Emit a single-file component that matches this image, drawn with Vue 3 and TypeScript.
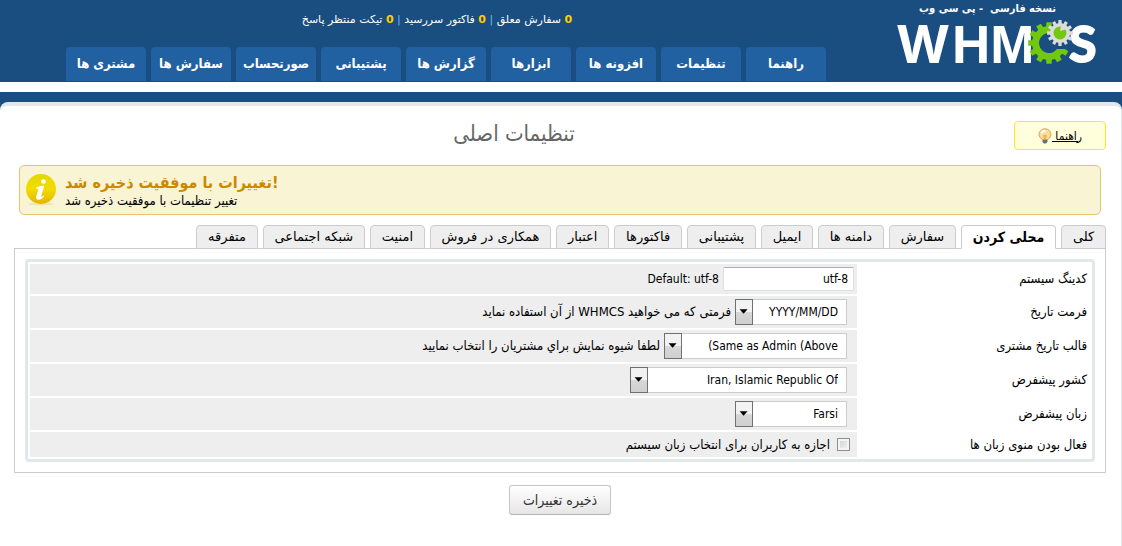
<script setup lang="ts">
import { ref } from 'vue'

interface Stat {
  count: number
  label: string
}

interface SelectRow {
  id: string
  label: string
  value: string
  size: string
  note?: string
}

const stats: Stat[] = [
  { count: 0, label: 'سفارش معلق' },
  { count: 0, label: 'فاکتور سررسید' },
  { count: 0, label: 'تیکت منتظر پاسخ' },
]

const menu: string[] = [
  'راهنما',
  'تنظیمات',
  'افزونه ها',
  'ابزارها',
  'گزارش ها',
  'پشتیبانی',
  'صورتحساب',
  'سفارش ها',
  'مشتری ها',
]

const tabs: string[] = [
  'کلی',
  'محلی کردن',
  'سفارش',
  'دامنه ها',
  'ایمیل',
  'پشتیبانی',
  'فاکتورها',
  'اعتبار',
  'همکاری در فروش',
  'امنیت',
  'شبکه اجتماعی',
  'متفرقه',
]

const activeTab = ref('محلی کردن')
const charset = ref('utf-8')
const allowLanguage = ref(false)

const selects = ref<SelectRow[]>([
  {
    id: 'date-format',
    label: 'فرمت تاریخ',
    value: 'YYYY/MM/DD',
    size: 'small',
    note: 'فرمتی که می خواهید WHMCS از آن استفاده نماید',
  },
  {
    id: 'client-date',
    label: 'قالب تاریخ مشتری',
    value: '\u2066(Same as Admin (Above\u2069',
    size: 'medium',
    note: 'لطفا شیوه نمایش براي مشتریان را انتخاب نمایید',
  },
  { id: 'country', label: 'کشور پیشفرض', value: 'Iran, Islamic Republic Of', size: 'large' },
  { id: 'language', label: 'زبان پیشفرض', value: 'Farsi', size: 'small' },
])

function gear(cx: number, cy: number, outer: number, root: number, teeth: number): string {
  const points: string[] = []
  const step = (Math.PI * 2) / teeth
  for (let i = 0; i < teeth; i++) {
    const a = i * step - Math.PI / 2
    const corners: [number, number][] = [
      [root, -0.32],
      [outer, -0.24],
      [outer, 0.24],
      [root, 0.32],
    ]
    for (const [r, t] of corners) {
      points.push(`${(cx + r * Math.cos(a + t * step)).toFixed(2)},${(cy + r * Math.sin(a + t * step)).toFixed(2)}`)
    }
  }
  return `M${points.join('L')}Z`
}

const greenGear = gear(153, 41, 21, 17, 12)
const greyGear = gear(164, 31, 13, 10, 12)
</script>

<template>
  <div class="page" dir="rtl">
    <header class="header">
      <a class="logo" href="#" aria-label="WHMCS">
        <span class="edition">نسخه فارسی &nbsp;- پی سی وب</span>
        <svg class="wordmark" width="202" height="66" viewBox="0 0 202 66" direction="ltr">
          <g class="letters">
            <text x="0" y="61">W</text>
            <text class="middle-letters" x="56" y="61">HM</text>
            <text class="last-letter" x="173" y="60">S</text>
          </g>
          <path :d="greenGear" fill="#71c80f" />
          <path d="M153 31a10 10 0 1 0 8 16h13V20h-14z" fill="#1a4d80" />
          <path :d="greyGear" fill="#dcdcdc" />
          <circle cx="164" cy="31" r="6.500" fill="#71c80f" />
          <path d="M164 29l1-5.500a7 7 0 0 1 5 4z" fill="#dcdcdc" />
        </svg>
      </a>
      <div class="top">
        <p class="stats">
          <template v-for="(s, i) in stats" :key="s.label">
            <span v-if="i" class="bar"> | </span><a href="#"><b>{{ s.count }}</b> {{ s.label }}</a>
          </template>
        </p>
        <nav class="menu">
          <a v-for="m in menu" :key="m" href="#">{{ m }}</a>
        </nav>
      </div>
    </header>
    <div class="strip"></div>
    <div class="frame">
      <main class="main">
        <div class="heading">
          <a class="help" href="#">
            <span>راهنما&nbsp;</span>
            <svg width="14" height="16" viewBox="0 0 14 16">
              <path d="M7 .8a6 5.6 0 0 0-6 5.6c0 2.400 1.700 3.400 3 5.100h6c1.300-1.700 3-2.700 3-5.100A6 5.600 0 0 0 7 .8z" fill="#fbdc9a" stroke="#d9a066" />
              <path d="M3.500 5.500a3.500 3 0 0 1 4-2.500" fill="none" stroke="#fff" stroke-width="2" />
              <path d="M5 7l1 4h2l1-4z" fill="#f6b73c" />
              <path d="M4.500 12h5v2l-1.500 1.500h-2L4.500 14z" fill="#6b7078" />
            </svg>
          </a>
          <h1>تنظیمات اصلی</h1>
        </div>

        <div class="alert" dir="ltr" role="status">
          <svg width="32" height="34" viewBox="0 0 32 34">
            <defs>
              <linearGradient id="info" x1="0" y1="0" x2="0" y2="1">
                <stop offset="0" stop-color="#e2d800" />
                <stop offset=".5" stop-color="#f2dc00" />
                <stop offset="1" stop-color="#e3b400" />
              </linearGradient>
            </defs>
            <ellipse cx="16" cy="31" rx="13" ry="1.500" fill="#f1e4b8" />
            <circle cx="16" cy="16" r="15" fill="url(#info)" />
            <ellipse cx="18.500" cy="8.500" rx="2.500" ry="2.200" fill="#fff" />
            <path d="M11 14.500c2.500-1 5-1.700 7.500-2l.7.500-3 10.200c-.2.900.6.900 2.300-.7l.7.800c-2 2.400-3.900 3.500-5.800 3.500-2 0-2.700-1.300-2.200-3.200l2.300-7.700-2.300-.4z" fill="#fff" />
          </svg>
          <div>
            <strong>تغییرات با موفقیت ذخیره شد!</strong>
            <p>تغییر تنظیمات با موفقیت ذخیره شد</p>
          </div>
        </div>

        <div class="tabs" role="tablist">
          <button
            v-for="t in tabs"
            :key="t"
            type="button"
            role="tab"
            :aria-selected="t === activeTab"
            :class="{ active: t === activeTab }"
            @click="activeTab = t"
          >
            {{ t }}
          </button>
        </div>

        <form @submit.prevent>
          <div class="panel">
            <div class="box">
              <table>
                <tbody>
                  <tr class="first">
                    <th scope="row"><label for="charset">کدینگ سیستم</label></th>
                    <td>
                      <div class="field">
                        <input id="charset" v-model="charset" type="text" /><span class="latin">Default: utf-8</span>
                      </div>
                    </td>
                  </tr>
                  <tr v-for="r in selects" :key="r.id" class="pick">
                    <th scope="row"><label :for="r.id">{{ r.label }}</label></th>
                    <td>
                      <div class="field">
                        <span class="select" :class="r.size">
                          <select :id="r.id" v-model="r.value">
                            <option>{{ r.value }}</option>
                          </select>
                          <svg class="arrow" width="18" height="26" viewBox="0 0 18 26"><path d="M4 10h9l-4.500 5z" /></svg>
                        </span>
                        <span v-if="r.note">{{ r.note }}</span>
                      </div>
                    </td>
                  </tr>
                  <tr class="last">
                    <th scope="row"><label for="allow-language">فعال بودن منوی زبان ها</label></th>
                    <td>
                      <label class="field check">
                        <input id="allow-language" v-model="allowLanguage" type="checkbox" />
                        <span>اجازه به کاربران برای انتخاب زبان سیستم</span>
                      </label>
                    </td>
                  </tr>
                </tbody>
              </table>
            </div>
          </div>
          <div class="actions">
            <button type="submit">ذخیره تغییرات</button>
          </div>
        </form>
      </main>
    </div>
  </div>
</template>

<style>
body {
  background: #fff;
}
</style>

<style scoped>
.page {
  display: flex;
  flex-direction: column;
  min-height: 100vh;
  font: 13px/16px 'DejaVu Sans Condensed', 'DejaVu Sans', sans-serif;
  color: #000;
}

.page * {
  box-sizing: border-box;
}

.header {
  display: flex;
  justify-content: space-between;
  height: 82px;
  padding: 0 24px 0 66px;
  background: #1a4d80;
}

.logo {
  display: flex;
  flex-direction: column;
  width: 202px;
  color: #fff;
  text-decoration: none;
}

.edition {
  padding-right: 42px;
  font-size: 11px;
  font-weight: bold;
  line-height: 18px;
  white-space: nowrap;
}

.wordmark {
  margin-top: -16px;
  overflow: visible;
}

.letters {
  font: bold 52px Inter, sans-serif;
  fill: #fff;
}

.middle-letters {
  font: bold 53px 'Liberation Sans', sans-serif;
}

.last-letter {
  font: bold 50px Lato, sans-serif;
  stroke: #fff;
  stroke-width: 2px;
}

.top {
  display: flex;
  flex-direction: column;
  justify-content: space-between;
  padding-bottom: 1px;
}

.stats {
  margin: 12px 18px 0 0;
  font: 11px/16px 'DejaVu Sans', sans-serif;
  text-align: center;
  color: #6cb8f0;
}

.stats a {
  color: #fff;
  text-decoration: none;
}

.stats b {
  color: #fc0;
}

.menu {
  display: flex;
  gap: 5px;
}

.menu a {
  width: 80px;
  padding: 9px 0;
  border-radius: 4px 4px 0 0;
  background: #2161a1;
  color: #fff;
  font-weight: bold;
  text-align: center;
  text-decoration: none;
}

.strip {
  height: 10px;
}

.frame {
  display: flex;
  flex: 1;
  padding-top: 10px;
  background: linear-gradient(#1a4d80 24px, #fff 24px);
}

.main {
  flex: 1;
  padding: 15px 15px 24px 14px;
  border-top: 4px solid #e2e7e9;
  border-right: 1px solid #e2e7e9;
  border-radius: 8px 8px 0 0;
  background: #fff;
}

.heading {
  display: flex;
}

.help {
  display: flex;
  align-items: center;
  justify-content: center;
  width: 92px;
  height: 29px;
  border: 1px solid #ffe91e;
  border-radius: 4px;
  background: #ffffdc;
  color: #000;
  font-size: 12px;
}

h1 {
  flex: 1;
  margin: 0;
  color: #666;
  font-size: 22px;
  font-weight: normal;
  line-height: 26px;
  text-align: center;
}

.alert {
  display: flex;
  gap: 8px;
  height: 50px;
  margin: 15px 5px 10px;
  padding: 7px 5px;
  border: 1px solid #e8c271;
  border-radius: 5px;
  background: #f9f4d4;
}

.alert strong {
  display: block;
  color: #c80;
  font-size: 16px;
  line-height: 20px;
}

.alert p {
  margin: 0;
}

.tabs {
  display: flex;
  gap: 5px;
  width: 83.3%;
  margin-bottom: -1px;
}

.tabs button {
  flex: 1 1 auto;
  height: 24px;
  padding: 0 10px;
  border: 1px solid #ccc;
  border-radius: 4px 4px 0 0;
  background: #eee;
  color: #000;
  font: 13px/16px 'DejaVu Sans', sans-serif;
  white-space: nowrap;
}

.tabs .active {
  position: relative;
  border-bottom-color: #fff;
  background: #fff;
  font-family: 'DejaVu Sans Condensed', 'DejaVu Sans', sans-serif;
  font-size: 14px;
  font-weight: bold;
}

.panel {
  padding: 10px;
  border: 1px solid #ccc;
}

.box {
  border: 3px solid #e2e7e9;
  border-radius: 4px;
}

table {
  width: 100%;
  border-spacing: 2px;
}

th {
  width: 231px;
  padding: 0 3px;
  font-weight: normal;
  text-align: right;
}

td {
  padding: 0 3px;
  background: #eee;
}

.first td {
  height: 30px;
}

.pick td {
  height: 32px;
}

.last td {
  height: 25px;
}

.field {
  display: flex;
  align-items: center;
  gap: 4px;
}

.latin {
  font-size: 12px;
}

.field input[type='text'] {
  width: 131px;
  height: 24px;
  padding: 0 5px;
  border: 1px solid #dbdfe6;
  border-top-color: #abadb3;
  border-radius: 2px;
  background: #fff;
  font: inherit;
  font-size: 12px;
}

.select {
  display: grid;
  margin-right: 7px;
}

.select select,
.arrow {
  grid-area: 1 / 1;
}

.select select {
  height: 26px;
  padding: 0 8px 0 24px;
  border: 1px solid #ccc;
  border-radius: 0;
  background: #fff;
  color: #000;
  font: inherit;
  font-size: 12px;
  appearance: none;
}

.small {
  width: 112px;
}

.medium {
  width: 183px;
}

.large {
  width: 217px;
}

.arrow {
  justify-self: end;
  border: 1px solid #707070;
  background: linear-gradient(#f2f2f2 50%, #d8d8d8 50%, #cfcfcf);
  pointer-events: none;
}

.check {
  gap: 7px;
  padding-right: 4px;
}

.check input {
  width: 13px;
  height: 13px;
  margin: 0;
  border: 1px solid #8e8f8f;
  background: linear-gradient(135deg, #cbcfd5, #f6f6f6);
  box-shadow: inset 0 0 0 2px #f4f4f4;
  appearance: none;
}

.check input:checked {
  background: #4b6a9b;
}

.actions {
  display: flex;
  justify-content: center;
  padding-top: 12px;
}

.actions button {
  height: 30px;
  padding: 0 13px;
  border: 1px solid #c5c5c5;
  border-bottom-color: #b3b3b3;
  border-radius: 3px;
  background: linear-gradient(#fff, #e6e6e6);
  color: #333;
  font: inherit;
  font-size: 14px;
}
</style>
